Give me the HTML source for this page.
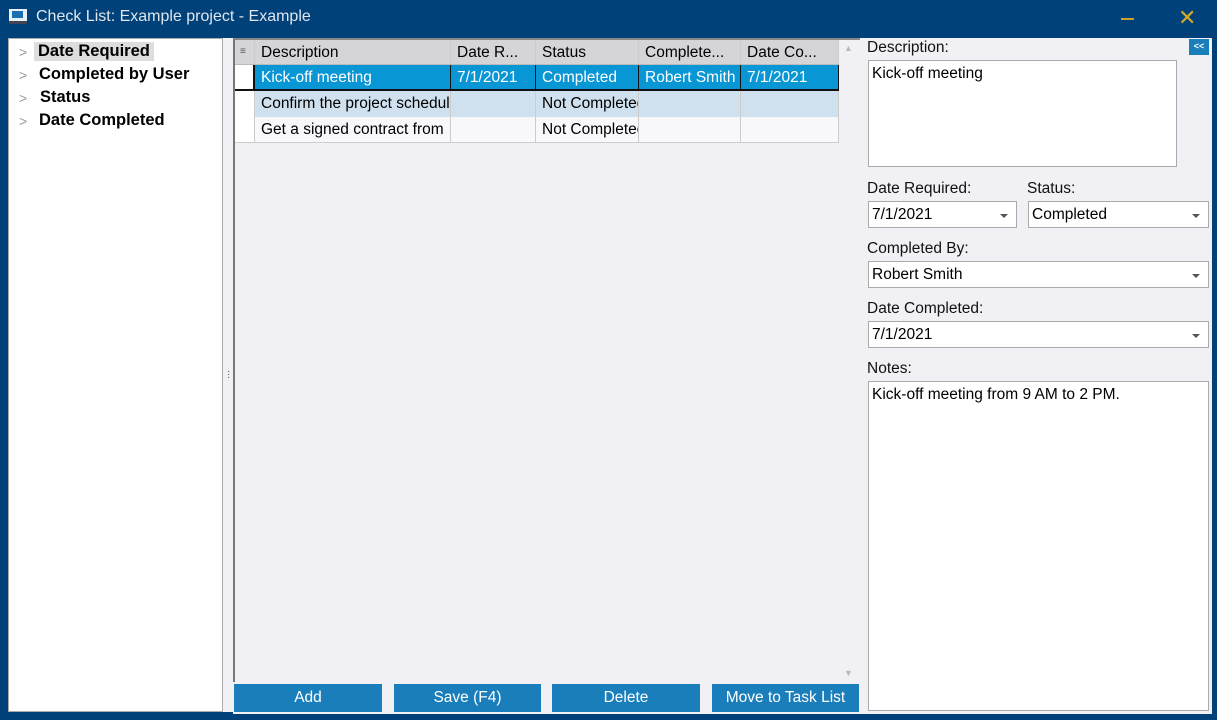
<!DOCTYPE html>
<html><head><meta charset="utf-8"><style>
*{box-sizing:border-box;margin:0;padding:0}
body{width:1217px;height:720px;overflow:hidden;background:#00417a;font-family:"Liberation Sans",sans-serif;font-size:15px;color:#000;position:relative}
.a{position:absolute}
.title{left:36px;top:8px;color:#dfe6ee;font-size:16px}
.tree{left:8px;top:38px;width:215px;height:674px;background:#fff;border:1px solid #aaa}
.tree div{position:absolute;left:30px;font-weight:bold;font-size:16.5px}
.tree span{position:absolute;left:10px;color:#999;font-weight:normal;font-size:14px}
.grid{left:233px;top:38px;width:627px;height:644px;background:#f0f0f5;border-left:2px solid #777;border-top:2px solid #888}
.row{position:absolute;left:0;height:26px;width:604px}
.c{position:absolute;top:0;height:100%;padding:4px 0 0 6px;border-right:1px solid #ccc;white-space:nowrap;overflow:hidden;font-size:15.5px}
.btn{top:684px;height:28px;background:#1a7ebb;color:#fff;text-align:center;padding-top:5px;font-size:15.5px}
.right{left:860px;top:38px;width:352px;height:676px;background:#f0f0f5}
.lbl{position:absolute;left:7px;font-size:15.5px;color:#111}
.box{position:absolute;background:#fff;border:1px solid #aaa;padding:4px 0 0 3px;font-size:15.5px}
.box i{position:absolute;right:8px;top:12px;border-left:4px solid transparent;border-right:4px solid transparent;border-top:4px solid #555}
</style></head><body>
<div class="a" style="left:9px;top:9px;width:18px;height:15px;background:#e8f0f8;border-bottom:3px solid #445"><div style="margin:2px 3px;width:11px;height:7px;background:#1a6fb0"></div></div>
<div class="a title">Check List: Example project - Example</div>
<div class="a" style="left:1121px;top:18px;width:13px;height:1.5px;background:#c9a227"></div>
<div class="a" style="left:1178px;top:5px;color:#d4a82a;font-size:22px">✕</div>

<div class="a tree">
<div style="top:3px;background:#ddd;padding:0 4px;left:25px">Date Required</div>
<div style="top:26px">Completed by User</div>
<div style="top:49px;left:31px">Status</div>
<div style="top:72px">Date Completed</div>
<span style="top:5px">&gt;</span><span style="top:28px">&gt;</span><span style="top:51px">&gt;</span><span style="top:74px">&gt;</span>
</div>
<div class="a" style="left:223px;top:38px;width:10px;height:674px;background:#f0f0f5"></div>
<div class="a" style="left:227px;top:370px;color:#555;font-size:10px;line-height:3px">·<br>·<br>·</div>

<div class="a grid">
<div class="row" style="top:0;height:25px;background:#d5d5d9;border-bottom:1px solid #bbb">
<div class="c" style="left:0;width:20px;font-size:10px;padding:6px 0 0 5px;color:#555">≡</div>
<div class="c" style="left:20px;width:196px">Description</div>
<div class="c" style="left:216px;width:85px">Date R...</div>
<div class="c" style="left:301px;width:103px">Status</div>
<div class="c" style="left:404px;width:102px">Complete...</div>
<div class="c" style="left:506px;width:98px">Date Co...</div></div>
<div class="row" style="top:25px;background:#0896d5;color:#fff;border-bottom:2px solid #111">
<div class="c" style="left:0;width:20px;background:#fff;border-right:2px solid #111"></div>
<div class="c" style="left:20px;width:196px;border-color:#111">Kick-off meeting</div>
<div class="c" style="left:216px;width:85px;border-color:#111">7/1/2021</div>
<div class="c" style="left:301px;width:103px;border-color:#111">Completed</div>
<div class="c" style="left:404px;width:102px;border-color:#111">Robert Smith</div>
<div class="c" style="left:506px;width:98px;border-color:#111">7/1/2021</div></div>
<div class="row" style="top:51px;background:#cfe0ee">
<div class="c" style="left:0;width:20px;background:#fff"></div>
<div class="c" style="left:20px;width:196px">Confirm the project schedule</div>
<div class="c" style="left:216px;width:85px"></div>
<div class="c" style="left:301px;width:103px">Not Completed</div>
<div class="c" style="left:404px;width:102px"></div>
<div class="c" style="left:506px;width:98px"></div></div>
<div class="row" style="top:77px;background:#f8f8fb;border-bottom:1px solid #ccc">
<div class="c" style="left:0;width:20px;background:#fff"></div>
<div class="c" style="left:20px;width:196px">Get a signed contract from</div>
<div class="c" style="left:216px;width:85px"></div>
<div class="c" style="left:301px;width:103px">Not Completed</div>
<div class="c" style="left:404px;width:102px"></div>
<div class="c" style="left:506px;width:98px"></div></div>
<div class="a" style="left:609px;top:3px;color:#bbb;font-size:9px">▲</div>
<div class="a" style="left:609px;top:628px;color:#bbb;font-size:9px">▼</div>
</div>
<div class="a" style="left:233px;top:682px;width:627px;height:32px;background:#f0f0f5"></div>
<div class="a btn" style="left:234px;width:148px">Add</div>
<div class="a btn" style="left:394px;width:147px">Save (F4)</div>
<div class="a btn" style="left:552px;width:148px">Delete</div>
<div class="a btn" style="left:712px;width:147px">Move to Task List</div>

<div class="a right">
<div class="a" style="left:329px;top:1px;width:20px;height:16px;background:#1a7ebb;color:#fff;font-size:9px;text-align:center;padding-top:2px;font-weight:bold">&lt;&lt;</div>
<div class="lbl" style="top:1px">Description:</div>
<div class="box" style="left:8px;top:22px;width:309px;height:107px">Kick-off meeting</div>
<div class="lbl" style="top:142px">Date Required:</div>
<div class="lbl" style="top:142px;left:167px">Status:</div>
<div class="box" style="left:8px;top:163px;width:149px;height:27px">7/1/2021<i></i></div>
<div class="box" style="left:168px;top:163px;width:181px;height:27px">Completed<i></i></div>
<div class="lbl" style="top:202px">Completed By:</div>
<div class="box" style="left:8px;top:223px;width:341px;height:27px">Robert Smith<i></i></div>
<div class="lbl" style="top:262px">Date Completed:</div>
<div class="box" style="left:8px;top:283px;width:341px;height:27px">7/1/2021<i></i></div>
<div class="lbl" style="top:322px">Notes:</div>
<div class="box" style="left:8px;top:343px;width:341px;height:330px">Kick-off meeting from 9 AM to 2 PM.</div>
</div>
</body></html>
